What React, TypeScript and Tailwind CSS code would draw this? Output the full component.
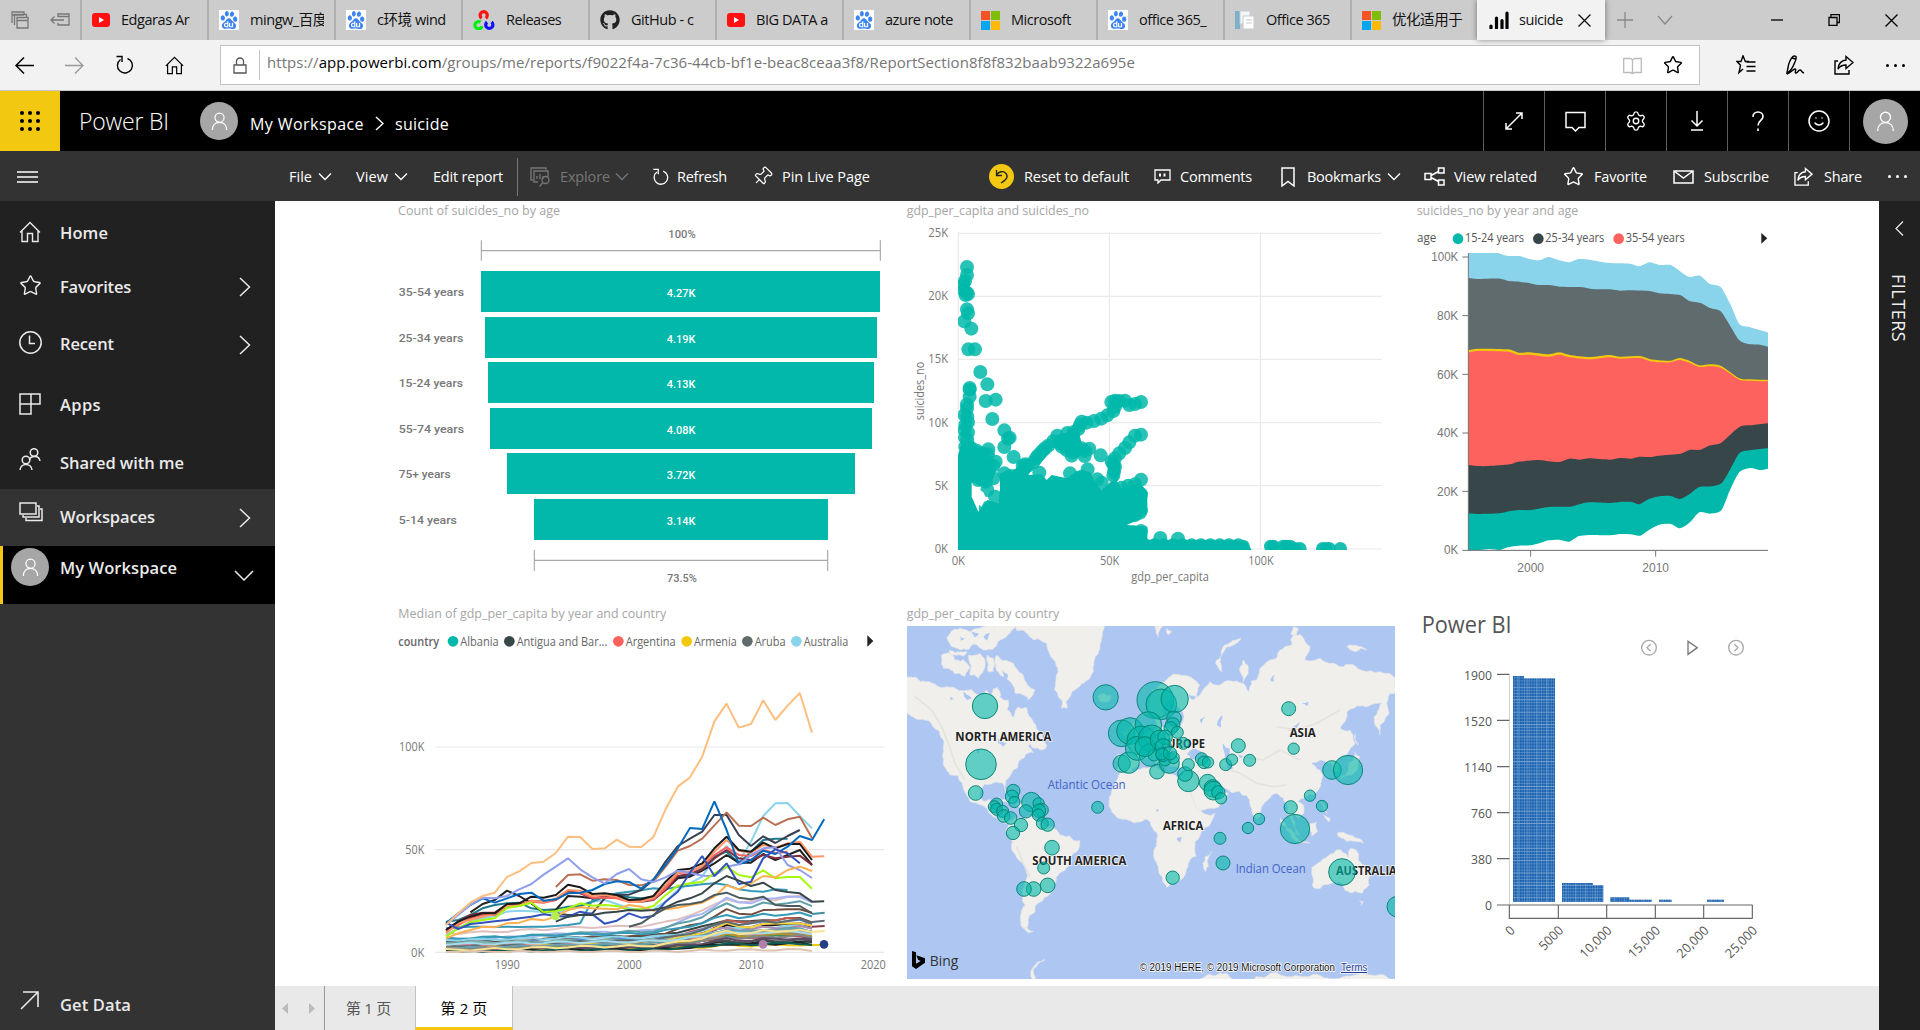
import React, { useLayoutEffect, useRef } from "react";
import { SiBaidu } from "react-icons/si";
import { FaGithub } from "react-icons/fa";
import { Star, Settings, Smile, Pin } from "lucide-react";

type Pt = [number, number];

/* Text set to a given width by adjusting its tracking. */
function Fit({ w, className = "", children }: { w: number; className?: string; children: React.ReactNode }) {
  const ref = useRef<HTMLSpanElement>(null);
  useLayoutEffect(() => {
    const el = ref.current;
    if (!el) return;
    el.style.letterSpacing = "0px";
    const n = (el.textContent || "").length;
    const natural = el.getBoundingClientRect().width;
    el.style.letterSpacing = (w - natural) / n + "px";
  }, [w]);
  return <span ref={ref} className={"inline-block shrink-0 whitespace-pre " + className}>{children}</span>;
}

/* ---------- icons ---------- */
const Ic = ({ w, h, vb, sw = 1.3, className = "", children }: { w: number; h: number; vb?: string; sw?: number; className?: string; children: React.ReactNode }) => (
  <svg width={w} height={h} viewBox={vb || `0 0 ${w} ${h}`} fill="none" stroke="currentColor" strokeWidth={sw} className={"shrink-0 " + className}>{children}</svg>
);
const ChevDown = ({ className = "" }: { className?: string }) => <Ic w={14} h={9} className={className}><path d="M1 1.5l6 6 6-6" /></Ic>;
const ChevRight = () => <Ic w={12} h={20} sw={1.5}><path d="M1 1l9.5 9L1 19" /></Ic>;
const HomeIcon = ({ s }: { s: number }) => <Ic w={s} h={s} vb="0 0 22 22" sw={1.4}><path d="M1 11.5L11 1.500l10 10M3 9.500V20.500h5.500v-8h5v8H19V9.500" /></Ic>;
const Person = ({ s }: { s: number }) => <Ic w={s} h={s} vb="0 0 20 20" sw={1.3}><circle cx="10" cy="6" r="4.800" /><path d="M2.500 19c0-4.800 3-8 7.500-8s7.500 3.200 7.500 8" /></Ic>;
const ShareIcon = ({ w }: { w: number }) => (
  <Ic w={w} h={w} vb="0 0 20 20" sw={1.4}><path d="M4 6H1v13h14v-4M12 1.500l7 6-7 6v-3.500c-4 0-6 1-8 4 .5-5 3-8.500 8-9z" /></Ic>
);
const RefreshIcon = ({ w, h }: { w: number; h: number }) => <Ic w={w} h={h} vb="0 0 18 20" sw={1.4}><path d="M5 4.500A7.500 7.500 0 1 0 12 3.500M1 1.500h5.500V7" /></Ic>;

const YouTube = () => <svg width="18" height="14" className="shrink-0"><rect width="18" height="14" rx="3" fill="#f11" /><path d="M7 4l5 3-5 3z" fill="#fff" /></svg>;
const Baidu = () => <span className="flex h-5 w-5 shrink-0 items-center justify-center bg-white text-[#3d85f0]"><SiBaidu size={18} /></span>;
const MsLogo = () => (
  <span className="grid h-[19px] w-[19px] shrink-0 grid-cols-2 gap-px"><i className="bg-[#f35325]" /><i className="bg-[#81bc06]" /><i className="bg-[#05a6f0]" /><i className="bg-[#ffba08]" /></span>
);
const OpenCv = () => (
  <svg width="22" height="20" viewBox="0 0 22 20" fill="none" strokeWidth="3.200" className="shrink-0">
    <path d="M8.600 8.200a3.600 3.600 0 1 1 4.200 0" stroke="#f11" />
    <path d="M7.500 12.200a3.600 3.600 0 1 0 1.500 4" stroke="#0e1" />
    <path d="M14 12a3.600 3.600 0 1 0 4.600 0" stroke="#11f" />
  </svg>
);
const DocIcon = () => <svg width="20" height="20" className="shrink-0"><rect width="5" height="18" x="0" y="1" fill="#7fb0cb" /><rect x="5" y="1" width="10" height="13" fill="#f4f7f8" stroke="#c3cbd0" /><rect x="8" y="6" width="11" height="13" fill="#fff" stroke="#c3cbd0" /><path d="M11 10h6M11 13h6" stroke="#c3cbd0" /></svg>;

const TABS: [React.ReactNode, string, string][] = [
  [<YouTube />, "Edgaras Ar", "pl-2.5"],
  [<Baidu />, "mingw_百度", "pl-2.5"],
  [<Baidu />, "c环境 wind", "pl-2.5"],
  [<OpenCv />, "Releases", "pl-2.5"],
  [<FaGithub size={20} className="shrink-0 text-[#222]" />, "GitHub - c", "pl-2.5"],
  [<YouTube />, "BIG DATA a", "pl-2.5"],
  [<Baidu />, "azure note", "pl-2.5"],
  [<MsLogo />, "Microsoft", "pl-2.5"],
  [<Baidu />, "office 365_", "pl-2.5"],
  [<DocIcon />, "Office 365", "pl-2.5"],
  [<MsLogo />, "优化适用于", "pl-2.5"],
];

function BrowserChrome() {
  return (
    <header className="shrink-0">
      <div className="flex h-10 bg-[#ccc] text-[14.500px] tracking-[-0.45px] text-[#111]">
        <div className="flex w-20 shrink-0 items-center gap-[21px] pl-[11px] text-[#777]">
          <Ic w={18} h={18}><path d="M1 12V1h12v2M1 4h12M3.500 14V3.500h12V6M6 6.500h11V17H6zM6 9.500h11" /></Ic>
          <Ic w={20} h={14}><path d="M8 4V1h11v11H8v-2M8 3.500h11M14 7H1M4.500 3.500L1 7l3.500 3.500" /></Ic>
        </div>
        {TABS.map(([icon, label, pad], i) => (
          <div key={i} className={"flex w-[127px] shrink-0 items-center border-l-2 border-[#b0b0b0] " + pad}>
            {icon}
            <span className="ml-[11px] mr-2.5 flex-1 overflow-hidden whitespace-nowrap">{label}</span>
          </div>
        ))}
        <div className="flex w-[128px] shrink-0 items-center bg-[#f2f2f2] pl-3 shadow-[0_0_6px_rgba(0,0,0,0.45)]">
          <svg width="20" height="18" className="shrink-0"><path d="M2 17v-2M7.500 17V7M13 17V9.500M18 17V2" stroke="#000" strokeWidth="3.200" strokeLinecap="round" /></svg>
          <span className="ml-2.5 w-[45px] overflow-hidden whitespace-nowrap">suicide</span>
          <Ic w={13} h={13} className="ml-[14px]"><path d="M.5.5l12 12M12.500.5l-12 12" /></Ic>
        </div>
        <div className="flex flex-1 items-center text-[#888]">
          <Ic w={16} h={16} className="ml-3"><path d="M8 0v16M0 8h16" /></Ic>
          <Ic w={16} h={10} className="ml-6"><path d="M1 1l7 8 7-8" /></Ic>
          <div className="ml-auto flex items-center gap-[45px] pr-[22px] text-black">
            <Ic w={12} h={2}><path d="M0 1h12" /></Ic>
            <Ic w={12} h={12}><path d="M1 3.500h8v8H1zM3 3.500v-3h8.500v8H9" /></Ic>
            <Ic w={13} h={13}><path d="M.5.5l12 12M12.500.5l-12 12" /></Ic>
          </div>
        </div>
      </div>
      <div className="flex h-[51px] items-center border-b border-[#c8c8c8] bg-[#f2f2f2]">
        <div className="flex w-[220px] items-center gap-[31px] pl-[15px]">
          <Ic w={19} h={17} sw={1.500}><path d="M19 8.500H1M9 .5l-8 8 8 8" /></Ic>
          <Ic w={19} h={17} sw={1.300} className="text-[#999]"><path d="M0 8.500h18M10 .5l8 8-8 8" /></Ic>
          <RefreshIcon w={19} h={20} />
          <HomeIcon s={19} />
        </div>
        <div className="flex h-10 w-[1480px] items-center border border-[#c2c2c2] bg-white">
          <Ic w={14} h={17} className="ml-3 text-[#555]"><path d="M1 8h12v8H1zM3.500 8V4.500a3.500 3.500 0 0 1 7 0V8" /></Ic>
          <div className="ml-3 h-[30px] w-px bg-[#c2c2c2]" />
          <div className="ml-[7px] -mt-1.5 text-[15px] text-[#767676]">
            <Fit w={868}>https://<span className="text-black">app.powerbi.com</span>/groups/me/reports/f9022f4a-7c36-44cb-bf1e-beac8ceaa3f8/ReportSection8f8f832baab9322a695e</Fit>
          </div>
          <Ic w={19} h={17} className="ml-auto text-[#bbb]"><path d="M.7 1.500h7l1.800 1.500 1.800-1.500h7v14h-7L9.500 17l-1.800-1.500h-7zM9.500 3v13" /></Ic>
          <Star size={20} strokeWidth={1.700} strokeLinejoin="miter" className="ml-[21px] mr-4" />
        </div>
        <div className="flex flex-1 items-center pl-9 text-black">
          <Ic w={20} h={20} sw={1.400}><path d="M13 6.500H9.300L7 .8 5 6.500H1l3.500 3.800L3 17.500l4-3.500M10.500 7h9M10.500 11.500h9M10.500 16h9" /></Ic>
          <Ic w={20} h={20} sw={1.400} className="ml-[29px]"><path d="M2 18L3.500 10C5 5 7 1 9.500 1s2 3 0 7C8 12 6 16 2 18zM7 3l3.500 1M2 19c4-1 6-5 8-5s-1 4 1 4 2-3 4-3 1 2 4 3" /></Ic>
          <span className="ml-[29px]"><ShareIcon w={20} /></span>
          <span className="ml-[32px] flex gap-[5px]"><i className="h-[3px] w-[3px] rounded-full bg-black" /><i className="h-[3px] w-[3px] rounded-full bg-black" /><i className="h-[3px] w-[3px] rounded-full bg-black" /></span>
        </div>
      </div>
    </header>
  );
}

const Avatar = ({ size, p }: { size: string; p: number }) => (
  <span className={"flex shrink-0 items-center justify-center rounded-full bg-[#a6a6a6] text-white " + size}><Person s={p} /></span>
);

function AppHeader() {
  const cells = [
    <Ic w={20} h={20} sw={1.500}><path d="M2 18L18 2M12 2h6v6M2 12v6h6" /></Ic>,
    <Ic w={21} h={21} sw={1.500}><path d="M1 1.500h19v15h-6l-3.500 3.500L7 16.500H1z" /></Ic>,
    <Settings size={22} strokeWidth={1.500} />,
    <Ic w={14} h={20} sw={1.500}><path d="M7 0v15M1.500 9.500L7 15l5.500-5.500M1 19h12" /></Ic>,
    <Ic w={14} h={21} sw={1.600}><path d="M2 6c0-3 2-5 5-5s5 2 5 4.500c0 4-5 4-5 9M7 17.500v2.500" /></Ic>,
    <Smile size={24} strokeWidth={1.500} />,
  ];
  return (
    <div className="flex h-[60px] shrink-0 items-center bg-black text-white">
      <div className="flex h-full w-[60px] items-center justify-center bg-[#f2c811]">
        <div className="grid grid-cols-3 gap-[4px]">{Array.from({ length: 9 }, (_, i) => <i key={i} className="h-[4px] w-[4px] rounded-full bg-black" />)}</div>
      </div>
      <div className="ml-[19px] w-[121px] text-[23px] font-light"><Fit w={90}>Power BI</Fit></div>
      <Avatar size="h-[38px] w-[38px]" p={19} />
      <div className="ml-[12px] mt-[5px] flex items-center text-[16px]">
        <Fit w={114}>My Workspace</Fit>
        <Ic w={9} h={15} className="ml-[11px]" sw={1.500}><path d="M1 1l7 6.500L1 14" /></Ic>
        <span className="ml-[11px]"><Fit w={54}>suicide</Fit></span>
      </div>
      <div className="ml-auto flex h-full">
        {cells.map((c, i) => <div key={i} className="flex h-full w-[61px] items-center justify-center border-l border-[#5c5c5c]">{c}</div>)}
        <div className="flex h-full w-[71px] items-center justify-center border-l border-[#5c5c5c]"><Avatar size="h-[45px] w-[45px]" p={21} /></div>
      </div>
    </div>
  );
}

const I = ({ w, children, c = "" }: { w: string; children: React.ReactNode; c?: string }) => <div className={"flex shrink-0 items-center " + w + " " + c}>{children}</div>;

function Toolbar() {
  return (
    <div className="flex h-[50px] shrink-0 items-center bg-[#333] pt-px text-[14.500px] text-white">
      <I w="w-[289px]" c="pl-[17px]"><Ic w={21} h={12}><path d="M0 1h21M0 6h21M0 11h21" /></Ic></I>
      <I w="w-[67px]"><Fit w={23}>File</Fit><ChevDown className="ml-1.5" /></I>
      <I w="w-[77px]"><Fit w={32}>View</Fit><ChevDown className="ml-1.5" /></I>
      <I w="w-[84px]"><Fit w={70}>Edit report</Fit></I>
      <div className="h-[38px] w-px bg-[#777]" />
      <I w="w-[134px]" c="pl-3 text-[#777]">
        <Ic w={21} h={20}><path d="M3 13H1V1h15v2M8 15H4V4h14v6M7 12v-3M10 12V7M13 12V9" /><circle cx="15.500" cy="13" r="3.500" /><path d="M13 15.500L9.500 19.500" /></Ic>
        <span className="ml-[9px]"><Fit w={50}>Explore</Fit></span><ChevDown className="ml-[5px]" />
      </I>
      <I w="w-[101px]"><RefreshIcon w={17} h={18} /><span className="ml-[8px]"><Fit w={50}>Refresh</Fit></span></I>
      <I w="w-[236px]"><Pin size={21} strokeWidth={1.400} className="-ml-px rotate-45" /><span className="ml-[9px]"><Fit w={88}>Pin Live Page</Fit></span></I>
      <I w="w-[165px]">
        <span className="flex h-[25px] w-[25px] items-center justify-center rounded-full bg-[#f2c811] text-[#222]"><Ic w={14} h={15}><path d="M1.500 1v5.500H7M1.500 6C4 2 8 2 10.500 4c3 3 2 6-4.500 10" /></Ic></span>
        <span className="ml-[10px]"><Fit w={105}>Reset to default</Fit></span>
      </I>
      <I w="w-[127px]"><Ic w={17} h={15}><path d="M1 1h15v10H7l-3 3v-3H1z" /><path d="M6 4.500v3M10.500 4.500v3" strokeWidth="2" /></Ic><span className="ml-[9px]"><Fit w={72}>Comments</Fit></span></I>
      <I w="w-[143px]"><Ic w={14} h={20} sw={1.500}><path d="M1 1h12v18l-6-4.500L1 19z" /></Ic><span className="ml-[12px]"><Fit w={74}>Bookmarks</Fit></span><ChevDown className="ml-1.5" /></I>
      <I w="w-[140px]"><Ic w={21} h={19} sw={1.500}><path d="M1 6.500h6v6H1zM14.500 1H20v5h-5.500zM14.500 13H20v5h-5.500zM7 8.500l7.500-4M7 10.500l7.500 4" /></Ic><span className="ml-[9px]"><Fit w={83}>View related</Fit></span></I>
      <I w="w-[109px]"><Star size={21} strokeWidth={1.600} strokeLinejoin="miter" className="-ml-px" /><span className="ml-[10px]"><Fit w={53}>Favorite</Fit></span></I>
      <I w="w-[121px]"><Ic w={21} h={14} sw={1.500}><path d="M1 1h19v12H1zM1 1l9.500 7L20 1" /></Ic><span className="ml-[10px]"><Fit w={65}>Subscribe</Fit></span></I>
      <I w="w-[94px]"><ShareIcon w={19} /><span className="ml-[11px]"><Fit w={38}>Share</Fit></span></I>
      <span className="flex gap-[5px]"><i className="h-[3px] w-[3px] rounded-full bg-white" /><i className="h-[3px] w-[3px] rounded-full bg-white" /><i className="h-[3px] w-[3px] rounded-full bg-white" /></span>
    </div>
  );
}

function Sidebar() {
  const items: [string, string, number, boolean, React.ReactNode][] = [
    ["Home", "h-[64px] pt-px", 48, false, <HomeIcon s={22} />],
    ["Favorites", "h-[44px]", 71, true, <Star size={23} strokeWidth={1.500} strokeLinejoin="miter" />],
    ["Recent", "h-[70px] pt-px", 54, true, <Ic w={23} h={23} sw={1.500}><circle cx="11.500" cy="11.500" r="10.700" /><path d="M10.500 4.500V12.500H16" /></Ic>],
    ["Apps", "h-[52px] pt-px", 41, false, <Ic w={22} h={22} sw={1.500}><path d="M1 1h20v10H1zM1 11v10h11V1" /></Ic>],
    ["Shared with me", "h-[58px] pt-[6px]", 124, false, <Ic w={22} h={22} sw={1.500} className="-mt-1"><circle cx="15" cy="4.500" r="3.800" /><path d="M10.500 12c1-4.500 9.500-5 10.500 1" /><circle cx="7" cy="12" r="3.800" /><path d="M1 22c.5-7.500 11.500-7.500 12 0" /></Ic>],
    ["Workspaces", "h-[57px] bg-[#333]", 95, true, <Ic w={24} h={20} sw={1.500} className="-mt-2"><path d="M1 1h16v11H1zM4 13v2h16V4h-2M7 16v2.500h16V7h-2" /></Ic>],
  ];
  return (
    <nav className="flex w-[275px] shrink-0 flex-col bg-[#333] text-[16.500px] font-semibold text-[#eaeaea]">
      <div className="bg-[#212121]">
        {items.map(([label, h, w, chev, icon]) => (
          <div key={label} className={"flex items-center pl-[19px] " + h}>
            <span className="-mt-1 flex w-[41px]">{icon}</span>
            <Fit w={w}>{label}</Fit>
            {chev && <span className="ml-auto mr-6"><ChevRight /></span>}
          </div>
        ))}
      </div>
      <div className="flex h-[58px] border-l-[3px] border-[#f2c811] bg-black pl-2 pt-[2px]">
        <Avatar size="h-[38px] w-[38px]" p={19} />
        <span className="ml-[11px] mt-[8px]"><Fit w={117}>My Workspace</Fit></span>
        <Ic w={20} h={11} sw={1.500} className="ml-auto mr-[21px] mt-[22px]"><path d="M1 1l9 9 9-9" /></Ic>
      </div>
      <div className="mt-auto flex h-[52px] items-center pl-[20px] pt-[2px]">
        <span className="-mt-2.5 w-[40px]"><Ic w={19} h={19} sw={1.600}><path d="M1 18L18 1M3 1h15v15" /></Ic></span>
        <Fit w={71}>Get Data</Fit>
      </div>
    </nav>
  );
}

/* ---------- charts ---------- */
/* Charts use a 3-units-per-pixel coordinate space. */
const T = ({ x, y, w, s = 37, a = "start", f = "#777", b = "400", r, children }: { x: number; y: number; w?: number; s?: number; a?: "start" | "middle" | "end"; f?: string; b?: string; r?: number; children: string }) => (
  <text x={x} y={y} fontSize={s} textAnchor={a} fill={f} fontWeight={b} textLength={w} lengthAdjust="spacingAndGlyphs" transform={r ? `rotate(${r} ${x} ${y})` : undefined}>{children}</text>
);
const Chart = ({ vb, w, h, children }: { vb: string; w: number; h: number; children: React.ReactNode }) => (
  <svg width={w} height={h} viewBox={vb} className="block">{children}</svg>
);

function Funnel() {
  const rows: [string, number, string, number, number, number][] = [
    ["35-54 years", 196, "4.27K", 303, 1500, 228], ["25-34 years", 194, "4.19K", 315, 1491, 366], ["15-24 years", 193, "4.13K", 324, 1482, 501],
    ["55-74 years", 196, "4.08K", 330, 1476, 639], ["75+ years", 156, "3.72K", 381, 1425, 774], ["5-14 years", 175, "3.14K", 462, 1344, 912],
  ];
  return (
    <Chart vb="0 18 1560 1182" w={520} h={394}>
      <T x={54} y={60} w={486} f="#a6a6a6" s={38}>Count of suicides_no by age</T>
      <g fontFamily="Roboto">
        <T x={906} y={129} w={82} a="middle" b="500" s={34}>100%</T>
        <path d="M304 136v61M1501 136v61M304 167H1501M463 1065v63M1343 1065v63M463 1096H1343" stroke="#aaa" strokeWidth="3.500" fill="none" />
        {rows.map(([l, lw, v, x1, x2, y]) => (
          <g key={l}>
            <rect x={x1} y={y} width={x2 - x1} height={123} fill="#01b8aa" />
            <T x={56} y={y + 75} w={lw} b="500" s={34}>{l}</T>
            <T x={903} y={y + 77} w={86} a="middle" f="#fff" b="500" s={34}>{v}</T>
          </g>
        ))}
        <T x={906} y={1161} w={90} a="middle" b="500" s={34}>73.5%</T>
      </g>
    </Chart>
  );
}

const DOTS: Pt[] = [
  [201, 216], [201, 240], [195, 258], [190, 270], [192, 286], [200, 293], [204, 297], [197, 300], [201, 343], [204, 355], [193, 379], [214, 401], [205, 463], [225, 463], [241, 531], [262, 568], [257, 618], [287, 614], [277, 672],
  [209, 579], [209, 584], [209, 605], [201, 628], [201, 640], [194, 660], [202, 665], [196, 690], [204, 682], [194, 705], [204, 712], [195, 728], [202, 735], [196, 755], [204, 752], [215, 760], [230, 767], [246, 775], [265, 763], [264, 778], [287, 800], [280, 812], [240, 815], [264, 826],
  [313, 706], [324, 731], [329, 728], [313, 756], [341, 786], [375, 808], [368, 812], [385, 812], [400, 802], [408, 790], [413, 783], [420, 776], [427, 768], [435, 760], [445, 752], [460, 738], [472, 722], [480, 745], [490, 735], [502, 714], [510, 730], [520, 712], [535, 702], [540, 690], [545, 680], [560, 683], [582, 678], [604, 671], [622, 661], [640, 648], [645, 635], [634, 621], [645, 617], [658, 618], [675, 617], [688, 630], [705, 627], [723, 621],
  [485, 755], [500, 765], [510, 758], [520, 772], [515, 782], [530, 765], [545, 760], [555, 768], [568, 761], [554, 783], [602, 781], [418, 833], [510, 835], [563, 823], [545, 845], [635, 800], [640, 808], [645, 815], [642, 830], [640, 842], [645, 790], [658, 775], [675, 759], [688, 742], [705, 722], [723, 719],
  [313, 835], [330, 843], [235, 855], [258, 860], [280, 850], [262, 885], [285, 905], [257, 940], [225, 780], [592, 853], [605, 863], [723, 854], [705, 868], [685, 872], [665, 878], [723, 898], [720, 908], [700, 905], [723, 945], [720, 953], [705, 960], [723, 1008], [721, 1022], [700, 1012], [781, 1029], [834, 1031],
];
function Scatter() {
  const low: number[] = [];
  for (let x = 735; x < 1040; x += 14) low.push(x);
  return (
    <Chart vb="0 18 1500 1182" w={500} h={394}>
      <T x={20} y={60} w={547} f="#a6a6a6" s={38}>gdp_per_capita and suicides_no</T>
      <path d="M174 115H1445M174 304H1445M174 493H1445M174 683H1445M174 872H1445M174 1062H1445M175 112V1062M628 112V1062M1081 112V1062" stroke="#eaeaea" strokeWidth="3.500" />
      {["25K", "20K", "15K", "10K", "5K", "0K"].map((l, i) => <T key={l} x={144} y={126 + i * 189.500} w={l.length === 3 ? 59 : 40} a="end">{l}</T>)}
      <T x={175} y={1110} w={40} a="middle">0K</T><T x={629} y={1110} w={58} a="middle">50K</T><T x={1083} y={1110} w={76} a="middle">100K</T>
      <T x={810} y={1158} w={233} a="middle">gdp_per_capita</T>
      <T x={72} y={588} w={175} a="middle" r={-90}>suicides_no</T>
      <clipPath id="plot"><rect x="174" y="100" width="1290" height="965" /></clipPath>
      <g fill="#01b8aa" clipPath="url(#plot)">
        <path d="M174 1065V780L185 745L222 755L245 765L275 785L290 820L280 850L262 880L215 862L215 905L235 950L262 915L295 925L300 880L300 835L345 822L375 800L400 815L385 840L425 838L440 855L455 840L500 850L530 828L570 830L590 870L605 885L645 850L665 880L720 865L742 890V950L715 975L680 990L742 995V1035L870 1035L1040 1040L1055 1065z" />
        <path d="M470 720L535 705L545 745L580 762L515 790L470 755zM622 800L645 780L662 815L650 860L630 850z" />
        <g fillOpacity=".85">{DOTS.map(([x, y], i) => <circle key={i} cx={x} cy={y} r="21" />)}</g>
        <g fillOpacity=".9">
          {low.map((x) => <circle key={x} cx={x} cy={1056 - (x % 4) * 2} r="20" />)}
          {[1112, 1120, 1150, 1160, 1170, 1185, 1200, 1268, 1278, 1288, 1321].map((x, i) => <circle key={x} cx={x} cy={i < 5 ? 1054 : 1061} r="20" />)}
        </g>
      </g>
      <path d="M232 880l18 12 8 18-14 26-18-22z" fill="#fff" />
    </Chart>
  );
}

const smooth = (p: Pt[]) => {
  let d = "";
  for (let i = 0; i < p.length - 1; i++) {
    const a = p[Math.max(0, i - 1)], b = p[i], c = p[i + 1], e = p[Math.min(p.length - 1, i + 2)];
    d += `C${b[0] + (c[0] - a[0]) / 8} ${b[1] + (c[1] - a[1]) / 8} ${c[0] - (e[0] - b[0]) / 8} ${c[1] - (e[1] - b[1]) / 8} ${c[0]} ${c[1]}`;
  }
  return d;
};
const pts = (s: string): Pt[] => s.split(" ").map((q) => q.split(",").map(Number) as Pt);
const BANDS: [string, string][] = [
  ["#8ad4eb", "205,174 290,174 300,176 325,183 358,183 388,192 418,196 446,186 478,196 508,202 535,192 570,194 600,200 630,204 690,206 718,214 748,202 778,210 812,210 842,230 868,246 900,242 928,266 962,276 992,330 1018,387 1048,396 1078,405 1104,412"],
  ["#5f6b6d", "205,249 235,252 300,251 325,258 358,260 390,265 415,270 448,270 480,275 540,276 570,281 600,283 630,283 660,287 690,286 748,288 778,295 812,297 842,301 868,318 902,324 930,339 962,349 992,395 1018,436 1045,447 1080,449 1104,455"],
  ["#f2c80f", "205,466 235,461 325,463 355,473 390,472 445,478 478,472 510,480 568,486 628,480 658,485 720,483 748,492 778,496 812,497 838,489 868,497 898,511 930,508 964,513 1018,550 1048,553 1104,555"],
  ["#fd625e", "205,473 235,468 325,470 355,480 390,479 445,485 478,479 510,487 568,493 628,487 658,491 720,489 748,498 778,502 812,502 838,495 868,503 898,516 930,514 964,519 1018,554 1048,557 1104,559"],
  ["#374649", "205,810 235,813 265,813 330,808 355,800 418,795 445,799 478,801 508,791 540,794 568,790 630,794 660,789 692,791 718,785 750,786 778,782 842,776 868,765 902,764 930,751 964,743 1018,696 1060,690 1104,685"],
  ["#01b8aa", "205,955 235,957 298,955 330,948 358,945 392,945 448,936 510,935 538,928 568,922 630,924 660,921 695,921 718,928 745,913 778,904 812,903 840,912 870,896 898,876 935,874 964,865 990,824 1018,775 1048,766 1104,759"],
  ["#ffffff", "205,1065 240,1065 268,1062 300,1065 325,1056 358,1052 392,1051 418,1045 446,1036 478,1034 508,1040 535,1024 568,1020 630,1021 660,1017 692,1018 720,1022 748,1004 778,989 812,987 840,1000 870,982 898,952 930,956 964,946 990,885 1018,832 1050,819 1080,825 1104,821"],
];
function Stream() {
  return (
    <Chart vb="0 18 1437 1182" w={479} h={394}>
      <T x={50} y={60} w={485} f="#a6a6a6" s={38}>suicides_no by year and age</T>
      <T x={51} y={141} w={58} f="#555">age</T>
      {([["#01b8aa", 174, "15-24 years"], ["#374649", 415, "25-34 years"], ["#fd625e", 656, "35-54 years"]] as [string, number, string][]).map(([c, x, l]) => (
        <g key={l}><circle cx={x} cy={131} r={16} fill={c} /><T x={x + 21} y={141} w={177} f="#555">{l}</T></g>
      ))}
      <path d="M1084 114l18 16-18 16z" fill="#222" />
      {BANDS.map(([c, s]) => {
        const p = pts(s);
        return <path key={c} fill={c} d={`M${p[0][0]} ${p[0][1]}${smooth(p)}V1066H205z`} />;
      })}
      <path d="M205 174V1066M187 186h18M187 362h18M187 538h18M187 714h18M187 889h18M187 1066H1104M392 1066v19M767 1066v19" stroke="#777" strokeWidth="3" fill="none" />
      <g fontFamily="Liberation Sans">
        {["100K", "80K", "60K", "40K", "20K", "0K"].map((l, i) => <T key={l} x={175} y={199 + i * 175.800} w={l.length === 4 ? 81 : l.length === 3 ? 64 : 43} a="end">{l}</T>)}
        <T x={392} y={1132} w={80} a="middle">2000</T><T x={767} y={1132} w={80} a="middle">2010</T>
      </g>
    </Chart>
  );
}

/* [colour, first year index, y values per year] */
const LINES: [string, number, number[]][] = [
  ["#8ad4eb", 0, [1005, 985, 965, 955, 948, 935, 932, 934, 936, 938, 930, 915, 905, 900, 912, 925, 930, 928, 905, 870, 850, 830, 775, 738, 785, 725, 648, 610, 609, 648, 685]],
  ["#1f7a8c", 0, [965, 960, 945, 925, 915, 910, 908, 925, 930, 928, 920, 918, 905, 890, 885, 892, 895, 890, 860, 830, 825, 805, 770, 755, 790, 755, 720, 716, 716]],
  ["#3599b8", 0, [985, 982, 980, 980, 981, 980, 981, 980, 980, 978, 975, 970, 900, 890, 880, 875, 871, 865, 868, 860, 857, 853, 850, 855, 868, 873, 875, 868, 870]],
  ["#373f51", 9, [940, 945, 945, 940, 895, 884, 884, 870, 840, 785, 738, 716, 695, 645, 645, 705, 738, 709, 729, 708, 690]],
  ["#222222", 2, [937, 912, 900, 872, 888, 910, 938, 930, 888, 890, 895, 892, 890, 902, 903, 898, 870, 835, 830, 812, 790, 765, 788, 788, 762, 780, 765, 750, 795]],
  ["#7f2e3e", 0, [990, 965, 945, 938, 938, 914, 914, 902, 905, 900, 872, 880, 895, 890, 892, 902, 905, 900, 870, 828, 822, 808, 775, 750, 775, 780, 765, 775, 770, 767, 795]],
  ["#fd625e", 0, [995, 975, 955, 945, 945, 920, 918, 905, 908, 900, 878, 878, 893, 893, 895, 905, 903, 898, 865, 820, 816, 798, 765, 742, 765, 768, 750, 760, 755]],
  ["#fe9666", 0, [1000, 970, 960, 950, 942, 918, 916, 902, 906, 895, 870, 872, 888, 885, 890, 905, 905, 893, 855, 818, 814, 798, 755, 720, 752, 758, 735, 742, 730, 725, 770, 769]],
  ["#1a1a1a", 0, [990, 965, 950, 940, 940, 912, 910, 890, 893, 885, 854, 862, 882, 880, 885, 900, 898, 888, 845, 810, 806, 790, 745, 710, 750, 755, 728, 745, 732, 732, 780]],
  ["#bb7052", 9, [861, 825, 823, 842, 838, 840, 855, 856, 845, 800, 752, 738, 716, 676, 637, 677, 678, 653, 675, 658, 650, 714]],
  ["#0069bd", 0, [970, 940, 915, 895, 908, 895, 882, 878, 902, 898, 880, 878, 870, 852, 844, 846, 866, 838, 795, 745, 684, 687, 604, 690, 793, 780, 752, 762, 740, 708, 720, 658]],
  ["#8f9fee", 0, [975, 945, 915, 893, 895, 888, 868, 852, 824, 800, 775, 808, 832, 850, 822, 807, 838, 846, 832, 812, 818, 827, 828, 800, 793, 765, 745, 742, 795, 810, 834]],
  ["#a6f70c", 0, [1010, 985, 967, 960, 955, 924, 918, 908, 937, 933, 925, 910, 917, 915, 918, 929, 927, 918, 885, 857, 850, 846, 820, 800, 825, 832, 811, 835, 831, 831, 866]],
  ["#ffb04e", 0, [1015, 1000, 990, 980, 982, 970, 968, 957, 961, 950, 930, 922, 925, 926, 928, 915, 920, 932, 928, 923, 915, 908, 890, 856, 868, 850, 828, 832, 810, 800, 813]],
  ["#3353bb", 0, [968, 987, 972, 968, 964, 960, 955, 950, 943, 948, 950, 935, 943, 971, 962, 940, 953, 948, 905, 875, 818, 768, 828, 790, 852, 845, 775, 748, 760, 790]],
  ["#fdbf80", 0, [975, 940, 908, 888, 878, 831, 814, 789, 785, 759, 710, 711, 747, 745, 719, 740, 741, 711, 628, 560, 532, 470, 364, 311, 383, 372, 301, 360, 317, 279, 398]],
  ["#374649", 9, [965, 950, 945, 945, 938, 935, 930, 932, 930, 922, 905, 895, 880, 850, 828, 842, 858, 848, 870, 876, 880, 905, 904]],
  ["#4c5b5e", 15, [980, 970, 945, 925, 915, 912, 905, 885, 878, 893, 898, 890, 915, 918, 918, 940]],
];
const RISE = [0, .01, .02, .03, .05, .06, .08, .1, .11, .13, .15, .16, .17, .17, .18, .2, .2, .23, .3, .4, .5, .6, .78, .95, .84, .85, .95, .93, .98, 1, .86];
const MINOR: [string, number, number][] = [
  ["#dfbfbf", 1000, 890], ["#a9b6f5", 1020, 888], ["#5fa0a8", 1018, 905], ["#374649", 1022, 955], ["#704c3e", 1030, 925], ["#3599b8", 1015, 940],
  ["#c45b4c", 1040, 955], ["#8a3a48", 1042, 968], ["#4a8ddc", 1032, 962], ["#1a1a1a", 1045, 972], ["#6f5b96", 1045, 990], ["#8ad4eb", 1020, 978],
  ["#fd817e", 1035, 998], ["#b687ac", 1035, 980], ["#7cb0a7", 1028, 988], ["#f5d33f", 1044, 968], ["#5f6b6d", 1038, 960], ["#28738a", 1048, 1003],
  ["#a78f8f", 1046, 995], ["#9e480e", 1050, 1008], ["#168980", 1048, 1005], ["#293537", 1050, 1025], ["#bb4a4a", 1049, 1010], ["#b59525", 1050, 1002],
  ["#475052", 1051, 1020], ["#6a9fb0", 1044, 985], ["#f2c80f", 1052, 1034], ["#7f898a", 1047, 1008], ["#a4ddee", 1032, 995], ["#5f4b66", 1052, 1015],
  ["#1c2325", 1054, 1030], ["#0f5c55", 1054, 1030], ["#fae58f", 1050, 990], ["#ddc3b0", 1056, 1049],
];
function Lines() {
  const X = (i: number) => 198 + 36.600 * i;
  const minor = MINOR.map(([c, a, b], k) => {
    const v = RISE.map((r, i) => a + (b - a) * r + Math.sin(i * 1.700 + k * 2.300) * 3);
    return <polyline key={"m" + k} stroke={c} points={v.map((y, i) => `${X(i)},${Math.min(y, 1056)}`).join(" ")} />;
  });
  const legend: [string, number, string, number][] = [["#01b8aa", 219, "Albania", 115], ["#374649", 388, "Antigua and Bar...", 272], ["#fd625e", 715, "Argentina", 150], ["#f2c80f", 920, "Armenia", 128], ["#5f6b6d", 1102, "Aruba", 93], ["#8ad4eb", 1249, "Australia", 134]];
  return (
    <Chart vb="0 -15 1560 1173" w={520} h={391}>
      <T x={55} y={54} w={804} f="#a6a6a6" s={38}>Median of gdp_per_capita by year and country</T>
      <T x={55} y={138} w={122} b="600" f="#666">country</T>
      {legend.map(([c, x, l, w]) => <g key={l}><circle cx={x} cy={124} r={16} fill={c} /><T x={x + 22} y={138} w={w} f="#666">{l}</T></g>)}
      <path d="M1462 106l18 17-18 17z" fill="#222" />
      <path d="M165 441H1511M165 749H1511M165 1057H1511" stroke="#e8e8e8" strokeWidth="3.500" />
      <T x={133} y={453} w={76} a="end">100K</T><T x={133} y={762} w={57} a="end">50K</T><T x={133} y={1070} w={40} a="end">0K</T>
      {["1990", "2000", "2010", "2020"].map((l, i) => <T key={l} x={382 + i * 366} y={1106} w={75} a="middle">{l}</T>)}
      <g fill="none" strokeWidth="6" strokeLinejoin="bevel">
        {minor}
        {LINES.map(([c, s, v], k) => <polyline key={k} stroke={c} points={v.map((y, i) => `${X(s + i)},${y}`).join(" ")} />)}
        <path d="M1296 1035h36" stroke="#f2c80f" /><path d="M1296 942l38-4" stroke="#3f8fa3" /><path d="M1296 966l38-4" stroke="#5f6b7d" /><path d="M1296 980l38-2" stroke="#8a3a48" /><path d="M1296 996l38-3" stroke="#fae58f" />
      </g>
      <circle cx="526" cy="948" r="13" fill="#b5ee50" /><circle cx="1149" cy="1033" r="13" fill="#b07fad" /><circle cx="1332" cy="1033" r="13" fill="#253f86" />
    </Chart>
  );
}

/* Roughens a coastline by midpoint displacement. */
const rough = (s: string, amp = 7, depth = 3) => {
  let p = pts(s);
  let seed = p.length * 97 + p[0][0];
  const rnd = () => { seed = (seed * 16807 + 11) % 2147483647; return seed / 2147483647 - .5; };
  for (let k = 0; k < depth; k++) {
    const q: Pt[] = [];
    p.forEach((a, i) => {
      const b = p[(i + 1) % p.length];
      const len = Math.hypot(b[0] - a[0], b[1] - a[1]);
      const m = Math.min(amp * 2, len * .45) / (k * .6 + 1);
      q.push(a, [(a[0] + b[0]) / 2 + rnd() * m, (a[1] + b[1]) / 2 + rnd() * m]);
    });
    p = q;
  }
  return p.map((a) => a[0].toFixed(1) + "," + a[1].toFixed(1)).join(" ");
};
const LAND = [
  "15,230 50,232 75,245 100,250 130,262 160,262 190,272 215,268 240,285 258,270 275,285 292,262 300,290 325,300 322,330 340,352 352,322 378,322 392,352 408,375 418,395 425,420 400,425 385,440 400,458 378,462 356,485 350,505 335,520 325,535 318,552 318,575 305,548 280,548 255,552 243,568 240,590 255,604 272,598 275,610 262,618 280,640 305,655 328,665 318,670 290,655 262,628 225,608 200,585 188,555 175,528 150,525 133,500 128,470 132,425 118,395 95,372 70,358 40,352 15,335",
  "345,72 612,72 604,120 585,170 580,215 555,245 525,270 510,290 500,325 485,325 475,290 468,240 470,200 450,165 440,130 400,120 385,105 350,92",
  "140,115 180,85 210,95 250,80 300,72 350,75 330,100 300,120 290,135 250,150 215,135 180,150 155,140", "125,165 145,158 165,180 190,178 210,205 195,230 165,222 130,205", "150,150 200,155 190,168 150,165", "290,165 340,190 372,235 405,270 385,300 370,285 345,278 325,240 300,225 285,190", "205,165 240,160 255,200 235,235 210,225", "262,165 280,175 280,215 262,210",
  "380,420 410,410 440,435 425,450",
  "296,590 325,598 345,608 320,606", "352,612 375,612 370,620 352,618",
  "326,668 350,652 378,650 410,662 440,680 470,690 480,705 510,708 540,722 538,740 520,760 515,790 495,812 470,830 462,860 440,890 425,905 408,915 405,935 390,945 385,965 378,990 362,975 365,930 368,890 378,840 376,805 352,775 335,738 325,705",
  "365,980 400,994 385,998",
  "660,518 700,515 740,505 770,500 785,515 830,530 860,528 870,560 890,600 905,635 945,640 935,665 905,695 885,725 888,770 865,790 855,825 830,850 800,862 788,845 775,800 762,750 772,710 755,680 735,658 700,668 655,655 630,625 628,590 645,550",
  "935,755 925,800 915,815 908,790 915,770",
  "655,462 690,465 690,440 680,425 705,425 725,405 745,390 770,385 765,350 790,345 785,380 830,380 850,340 810,300 790,320 780,350 760,345 750,300 780,255 820,222 870,230 900,255 890,290 860,280 880,300 905,275 930,245 960,255 1000,245 1030,250 1020,200 1030,180 1045,200 1045,250 1070,240 1080,205 1110,180 1140,150 1175,135 1180,105 1210,115 1230,140 1215,180 1260,175 1300,190 1330,200 1360,195 1400,215 1440,215 1490,240 1490,275 1470,280 1460,310 1458,350 1440,405 1425,375 1432,335 1445,310 1400,320 1370,318 1340,340 1320,385 1350,390 1365,430 1340,465 1310,485 1318,515 1302,515 1295,490 1260,480 1235,490 1260,510 1262,550 1240,585 1200,598 1195,605 1212,635 1195,655 1180,640 1185,680 1198,705 1188,700 1170,650 1155,605 1130,580 1110,595 1085,620 1080,650 1068,655 1050,615 1042,588 1020,575 990,575 955,555 970,580 985,580 970,605 935,625 895,630 880,600 865,560 850,530 855,505 810,500 800,480 780,475 790,500 775,495 755,468 725,475 710,500 690,520 650,515 650,480",
  "690,400 705,365 715,385 725,405 705,415", "668,395 685,385 685,405 670,408",
  "592,290 610,280 635,288 628,302 600,304",
  "955,205 950,180 965,150 990,128 1022,115 1015,125 985,140 968,160 960,185 965,215",
  "1340,140 1365,135 1400,150 1365,155", "1180,80 1195,85 1190,105 1172,100", "765,75 790,75 775,112", "800,85 815,95 805,105",
  "1345,510 1360,480 1365,455 1380,470 1375,500 1355,525 1320,535", "1375,435 1365,400 1370,430",
  "1140,655 1175,690 1200,725 1190,725 1160,690", "1225,685 1250,665 1252,695 1235,708", "1195,722 1230,728 1200,730", "1312,700 1340,702 1375,715 1390,730 1350,722 1320,712", "1262,600 1275,620 1282,640 1270,625", "1270,645 1290,655 1285,665",
  "1235,802 1262,785 1285,768 1310,750 1330,758 1345,772 1352,745 1368,750 1375,780 1400,800 1412,825 1408,855 1385,880 1350,878 1330,855 1300,848 1270,855 1245,865 1240,840", "1378,902 1390,905 1383,917",
  "888,1140 930,1122 960,1118 1000,1140", "1060,1140 1090,1132 1110,1120 1160,1130 1250,1122 1330,1130 1400,1124 1490,1138 1490,1145 1060,1145", "435,1077 405,1095 392,1120 398,1140 405,1140 400,1115 412,1095",
];
const WATER = [
  "190,275 215,295 200,300", "150,290 165,300 150,302", "295,415 320,430 310,440 295,430", "232,440 240,455 232,460", "950,375 968,345 960,385", "900,360 915,350 905,372",
  "860,462 880,445 900,452 925,470 900,478 872,478", "968,430 988,445 985,475 1000,505 982,508 975,470", "1015,462 1030,468 1020,475", "1160,395 1200,365 1190,385", "1205,310 1225,305 1220,318", "830,715 845,712 840,728", "770,625 778,630 772,636",
  "1110,240 1125,225 1120,245", "1030,250 1045,220 1055,250 1045,275", "215,95 235,100 225,112", "250,110 270,100 262,122", "180,105 195,115 182,122", "305,210 325,225 318,240",
];
const BUB = "255,318,38 243,493,46 227,579,22 617,292,38 593,622,18 340,573,20 336,590,20 343,606,17 394,606,29 416,610,17 425,630,20 417,632,20 415,645,18 378,634,20 290,612,18 283,620,18 290,628,18 308,634,18 311,648,19 332,654,19 363,675,20 339,699,20 427,670,18 443,674,20 456,743,22 431,804,18 443,856,22 401,867,22 372,867,22 766,300,55 784,313,46 824,297,41 665,400,40 690,393,40 665,491,26 686,488,32 745,375,40 725,422,44 712,445,36 755,415,40 752,465,34 762,465,18 771,515,22 735,440,30 780,420,30 822,355,22 818,375,22 812,385,20 832,397,18 795,412,22 850,430,18 790,440,24 808,490,30 795,480,18 820,473,18 788,465,20 785,462,18 810,460,20 865,543,32 855,522,22 865,494,18 905,477,19 912,487,19 924,487,17 977,494,18 996,479,17 1049,481,18 1015,437,21 1166,326,21 1181,446,17 923,548,25 938,565,26 940,572,28 955,577,20 963,595,17 1296,510,28 1344,510,44 1230,587,17 1266,618,17 1172,622,20 1185,687,44 1077,657,17 1044,684,17 960,715,18 969,789,21 818,833,20 1326,816,40 1492,920,31".split(" ").map((s) => s.split(",").map(Number));
function MapChart() {
  const label = { paintOrder: "stroke" as const, lengthAdjust: "spacingAndGlyphs" as const };
  const M = ({ x, y, w, f, u, children }: { x: number; y: number; w: number; f?: string; u?: string; children: string }) => (
    <text x={x} y={y} textLength={w} lengthAdjust="spacingAndGlyphs" fill={f} textDecoration={u}>{children}</text>
  );
  return (
    <Chart vb="0 -15 1500 1173" w={500} h={391}>
      <T x={20} y={54} w={458} f="#a6a6a6" s={38}>gdp_per_capita by country</T>
      <clipPath id="map"><rect x="21" y="78" width="1464" height="1059" /></clipPath>
      <g clipPath="url(#map)">
        <rect x="21" y="78" width="1464" height="1059" fill="#adc6f2" />
        {LAND.map((s, i) => <polygon key={i} points={rough(s, 9, 3)} fill="#f0efeb" stroke="#e2e3e6" strokeWidth="2" />)}
        {WATER.map((s, i) => <polygon key={i} points={rough(s, 3, 2)} fill="#adc6f2" />)}
        <g stroke="#e4e3de" strokeWidth="5" fill="none"><path d="M45 290l50 40 30 50 20 50 20 60 30 50M960 500l60 20 50 30 50 10 40-5M1030 470l60 10 50-30 60 30M1130 380l60 10 60-20 70-40M350 740l20 50 20 40" /></g>
        <g fontWeight="700" fill="#222" stroke="#f6f5f2" strokeWidth="5" fontSize="38" paintOrder={label.paintOrder}>
          <M x={166} y={423} w={288}>NORTH AMERICA</M><M x={397} y={795} w={282}>SOUTH AMERICA</M>
          <M x={782} y={443} w={133}>EUROPE</M><M x={1169} y={410} w={78}>ASIA</M>
          <M x={789} y={691} w={121}>AFRICA</M><M x={1308} y={825} w={182}>AUSTRALIA</M>
        </g>
        <g fill="#4464c8" fontSize="38"><M x={443} y={566} w={234}>Atlantic Ocean</M><M x={1007} y={818} w={210}>Indian Ocean</M></g>
        {BUB.map(([x, y, r], i) => <circle key={i} cx={x} cy={y} r={r} fill="#01b8aa" fillOpacity=".6" stroke="#01806f" strokeOpacity=".9" strokeWidth="3" />)}
        <path d="M36 1053l12 4v34l14-8-8-4-5-13 26 9v13l-27 19-12-8z" fill="#000" />
        <text x="89" y="1098" fontSize="43" fill="#333" textLength="86" lengthAdjust="spacingAndGlyphs">Bing</text>
        <g fontFamily="Liberation Sans" fontSize="30" stroke="#fff" strokeWidth="4" paintOrder={label.paintOrder}>
          <M x={719} y={1113} w={586} f="#111">© 2019 HERE, © 2019 Microsoft Corporation</M>
          <M x={1323} y={1113} w={79} f="#23408e" u="underline">Terms</M>
        </g>
      </g>
    </Chart>
  );
}

function Histogram() {
  const bars = [[339, 228, 33, 678], [371, 235, 94, 671], [486, 849, 93, 57], [578, 855, 32, 51], [631, 891, 57, 15], [686, 899, 69, 7], [777, 899, 38, 7], [921, 899, 51, 7]];
  return (
    <Chart vb="0 -15 1437 1173" w={479} h={391}>
      <defs>
        <pattern id="dots" width="7.300" height="9.300" patternUnits="userSpaceOnUse"><rect width="8" height="10" fill="#1a62b0" /><path d="M0 0H8M0 0V10" stroke="#6a9ace" strokeWidth="3" /></pattern>
        <pattern id="weave" width="29" height="37" patternUnits="userSpaceOnUse"><path d="M0 4H29M6 0V37" stroke="#fff" strokeOpacity=".2" strokeWidth="3" /></pattern>
      </defs>
      <T x={65} y={98} w={270} s={69} f="#555">Power BI</T>
      <g fill="none" stroke="#aaa" strokeWidth="4"><circle cx="747" cy="143" r="22" /><circle cx="1008" cy="143" r="22" /><path d="M752 132l-11 11 11 11M1003 132l11 11-11 11" /><path d="M864 124l28 19-28 20z" stroke="#777" /></g>
      {["1900", "1520", "1140", "760", "380", "0"].map((l, i) => <T key={l} x={276} y={240 + i * 138} w={l.length * 21} a="end" s={39} f="#555">{l}</T>)}
      <path d="M328 223V915" stroke="#ccc" strokeWidth="3" />
      <path d="M291 223h37M291 361h37M291 500h37M291 638h37M291 776h37M291 915H1058M328 915v40M475 915v40M620 915v40M766 915v40M911 915v40M1057 915v40M326 955H1058" stroke="#666" strokeWidth="3.500" />
      {bars.map(([x, y, w, h]) => <g key={x}><rect x={x} y={y} width={w} height={h} fill="url(#dots)" /><rect x={x} y={y} width={w} height={h} fill="url(#weave)" /></g>)}
      {["0", "5000", "10,000", "15,000", "20,000", "25,000"].map((l, i) => <T key={l} x={347 + i * 145.500} y={994} w={[21, 84, 117, 117, 117, 117][i]} a="end" s={39} f="#555" r={-45}>{l}</T>)}
    </Chart>
  );
}

export default function App() {
  return (
    <div className="flex h-[1030px] w-[1920px] flex-col overflow-hidden bg-white font-['Open_Sans','Noto_Sans_CJK_SC',sans-serif]">
      <BrowserChrome />
      <AppHeader />
      <Toolbar />
      <div className="flex min-h-0 flex-1">
        <Sidebar />
        <main className="flex flex-1 flex-col">
          <div className="grid flex-1 grid-cols-[520px_500px_479px] grid-rows-[394px_391px] pl-[105px]">
            <Funnel />
            <Scatter />
            <Stream />
            <Lines />
            <MapChart />
            <Histogram />
          </div>
          <footer className="flex h-11 shrink-0 items-stretch bg-[#e9e9e9] text-[15px]">
            <div className="flex w-[50px] items-center justify-between border-r border-[#999] pl-[7px] pr-[9px]">
              <svg width="6" height="11"><path d="M6 0v11L0 5.500z" fill="#bbb" /></svg>
              <svg width="6" height="11"><path d="M0 0v11l6-5.500z" fill="#bbb" /></svg>
            </div>
            <div className="flex w-[90px] items-center justify-center pr-[3px] text-[#555]"><Fit w={45}>第 1 页</Fit></div>
            <div className="flex w-[98px] items-center justify-center border-x border-b-[3px] border-x-[#c2c2c2] border-b-[#f2c811] bg-white pt-[3px] text-black"><Fit w={47}>第 2 页</Fit></div>
          </footer>
        </main>
        <aside className="flex w-[41px] shrink-0 flex-col items-center bg-[#212121] text-[#eee]">
          <Ic w={9} h={15} sw={1.200} className="mt-5"><path d="M8 .5l-7 7 7 7" /></Ic>
          <span className="mr-0.5 mt-[38px] text-[18px] font-medium tracking-[0.5px] [writing-mode:vertical-rl]">FILTERS</span>
        </aside>
      </div>
    </div>
  );
}
